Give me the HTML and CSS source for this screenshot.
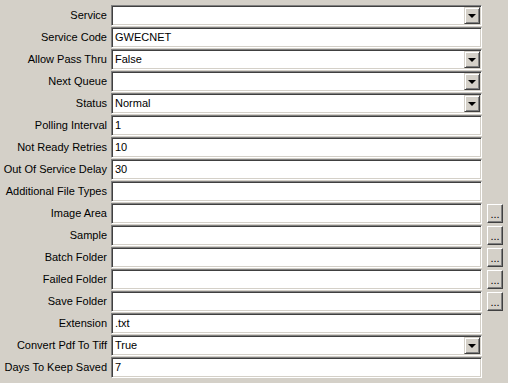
FILE: index.html
```html
<!DOCTYPE html>
<html lang="en">
<head>
    <meta charset="UTF-8">
    <title>Service Settings</title>
    <link rel="stylesheet" href="styles.css">
</head>
<body>
<form class="settings">
    <label>Service</label>
    <div class="field combo"><span class="value"></span><span class="drop"><i></i></span></div>

    <label>Service Code</label>
    <div class="field"><span class="value">GWECNET</span></div>

    <label>Allow Pass Thru</label>
    <div class="field combo"><span class="value">False</span><span class="drop"><i></i></span></div>

    <label>Next Queue</label>
    <div class="field combo"><span class="value"></span><span class="drop"><i></i></span></div>

    <label>Status</label>
    <div class="field combo"><span class="value">Normal</span><span class="drop"><i></i></span></div>

    <label>Polling Interval</label>
    <div class="field"><span class="value">1</span></div>

    <label>Not Ready Retries</label>
    <div class="field"><span class="value">10</span></div>

    <label>Out Of Service Delay</label>
    <div class="field"><span class="value">30</span></div>

    <label>Additional File Types</label>
    <div class="field"><span class="value"></span></div>

    <label>Image Area</label>
    <div class="field"><span class="value"></span></div>
    <button type="button" class="browse">...</button>

    <label>Sample</label>
    <div class="field"><span class="value"></span></div>
    <button type="button" class="browse">...</button>

    <label>Batch Folder</label>
    <div class="field"><span class="value"></span></div>
    <button type="button" class="browse">...</button>

    <label>Failed Folder</label>
    <div class="field"><span class="value"></span></div>
    <button type="button" class="browse">...</button>

    <label>Save Folder</label>
    <div class="field"><span class="value"></span></div>
    <button type="button" class="browse">...</button>

    <label>Extension</label>
    <div class="field"><span class="value">.txt</span></div>

    <label>Convert Pdf To Tiff</label>
    <div class="field combo"><span class="value">True</span><span class="drop"><i></i></span></div>

    <label>Days To Keep Saved</label>
    <div class="field"><span class="value">7</span></div>
</form>
</body>
</html>
```

FILE: styles.css
```css
body {
    margin: 0;
    background-color: #d4d0c8;
    font-family: "Liberation Sans", Arial, sans-serif;
    font-size: 11px;
    color: #000;
}

.settings {
    display: grid;
    grid-template-columns: 107px 371px 17px;
    grid-auto-rows: 21px;
    column-gap: 4px;
    row-gap: 1px;
    padding-top: 5px;
}

.settings label {
    grid-column: 1;
    text-align: right;
    line-height: 21px;
    white-space: nowrap;
}

.field {
    grid-column: 2;
    box-sizing: border-box;
    display: flex;
    align-items: stretch;
    background-color: #fff;
    border: 1px solid;
    border-color: #808080 #fff #fff #808080;
    box-shadow: inset 1px 1px #404040, inset -1px -1px #d4d0c8;
    padding: 1px;
}

.field .value {
    flex: 1;
    line-height: 17px;
    padding-left: 2px;
}

.drop {
    width: 16px;
    box-sizing: border-box;
    background-color: #d4d0c8;
    border: 1px solid;
    border-color: #d4d0c8 #404040 #404040 #d4d0c8;
    box-shadow: inset 1px 1px #fff, inset -1px -1px #808080;
    display: flex;
    align-items: center;
    justify-content: center;
}

.drop i {
    width: 0;
    height: 0;
    border-left: 4px solid transparent;
    border-right: 4px solid transparent;
    border-top: 4px solid #000;
    margin-top: 1px;
}

.browse {
    grid-column: 3;
    margin: 1px 0 0 1px;
    padding: 0;
    box-sizing: border-box;
    width: 16px;
    height: 19px;
    font-family: inherit;
    font-size: 11px;
    line-height: 19px;
    color: #000;
    background-color: #d4d0c8;
    border: 1px solid;
    border-color: #fff #404040 #404040 #fff;
    box-shadow: inset -1px -1px #808080;
    border-radius: 0;
    text-align: center;
}
```
